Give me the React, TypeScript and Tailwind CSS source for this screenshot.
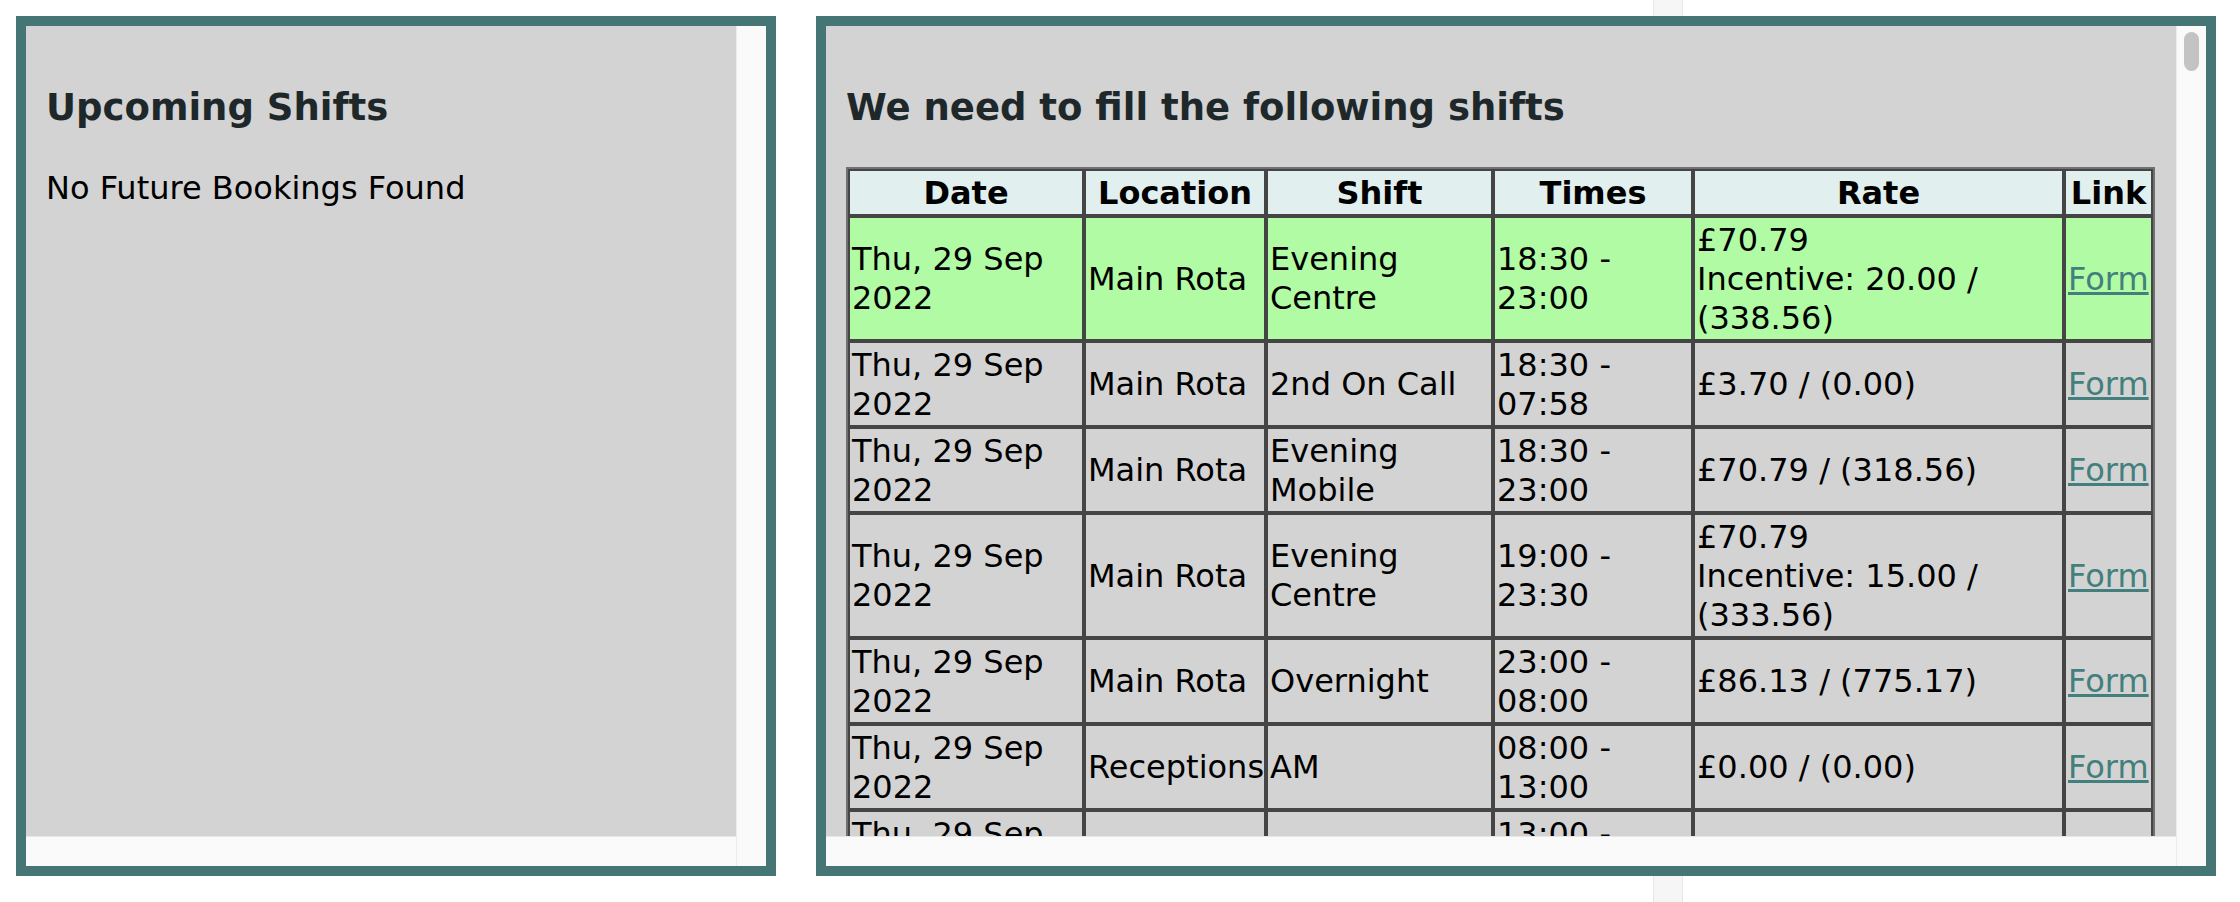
import React from "react";

type Row = {
  date: string;
  loc: string;
  shift: string;
  times: string;
  rate: React.ReactNode;
  green?: boolean;
};

const rows: Row[] = [
  {
    date: "Thu, 29 Sep 2022",
    loc: "Main Rota",
    shift: "Evening Centre",
    times: "18:30 - 23:00",
    rate: (
      <>
        £70.79
        <br />
        Incentive: 20.00 / (338.56)
      </>
    ),
    green: true,
  },
  { date: "Thu, 29 Sep 2022", loc: "Main Rota", shift: "2nd On Call", times: "18:30 - 07:58", rate: "£3.70 / (0.00)" },
  { date: "Thu, 29 Sep 2022", loc: "Main Rota", shift: "Evening Mobile", times: "18:30 - 23:00", rate: "£70.79 / (318.56)" },
  {
    date: "Thu, 29 Sep 2022",
    loc: "Main Rota",
    shift: "Evening Centre",
    times: "19:00 - 23:30",
    rate: (
      <>
        £70.79
        <br />
        Incentive: 15.00 / (333.56)
      </>
    ),
  },
  { date: "Thu, 29 Sep 2022", loc: "Main Rota", shift: "Overnight", times: "23:00 - 08:00", rate: "£86.13 / (775.17)" },
  { date: "Thu, 29 Sep 2022", loc: "Receptions", shift: "AM", times: "08:00 - 13:00", rate: "£0.00 / (0.00)" },
  { date: "Thu, 29 Sep 2022", loc: "Receptions", shift: "PM", times: "13:00 - 18:30", rate: "£0.00 / (0.00)" },
  { date: "Fri, 30 Sep 2022", loc: "Main Rota", shift: "Overnight", times: "23:00 - 08:00", rate: "£86.13 / (775.17)" },
];

function Panel({
  widthClass,
  thumb,
  children,
}: {
  widthClass: string;
  thumb?: boolean;
  children: React.ReactNode;
}) {
  return (
    <div className={`flex h-[860px] ${widthClass} shrink-0 border-[10px] border-[#457575] bg-[#fafafa]`}>
      <div className="flex min-w-0 flex-1 flex-col">
        <div className="min-h-0 flex-1 overflow-hidden bg-[#d3d3d3] px-[20px] pt-[20px]">{children}</div>
        <div className="h-[30px] shrink-0 border-t border-[#e6e6e6] bg-[#fafafa]" />
      </div>
      <div className="flex w-[30px] shrink-0 justify-center border-l border-[#ececec] bg-[#fafafa] pt-[6px]">
        {thumb ? <div className="h-[39px] w-[15px] rounded-full bg-[#c3c3c3]" /> : null}
      </div>
    </div>
  );
}

const th = "border-2 border-[#454545] bg-[#e1efef] px-[2px] pb-[1.5px] pt-[2.5px] text-center align-middle font-bold";
const td = "border-2 border-[#454545] px-[2px] pb-[1.5px] pt-[2.5px] text-left align-middle";

export default function App() {
  return (
    <div className="min-h-screen w-full bg-white bg-[linear-gradient(to_right,transparent_1653px,#e8e8e8_1653px,#e8e8e8_1654px,#f6f6f6_1654px,#f6f6f6_1682px,#e8e8e8_1682px,#e8e8e8_1683px,transparent_1683px)] font-['DejaVu_Sans',Verdana,sans-serif] text-black">
      <div className="flex gap-[40px] pl-[16px] pt-[16px]">
        <Panel widthClass="w-[760px]">
          <h3 className="mb-[39px] mt-[40px] text-[37px] font-bold leading-[44px] text-[#1e282a]">Upcoming Shifts</h3>
          <p className="text-[32px] leading-[39px]">No Future Bookings Found</p>
        </Panel>
        <Panel widthClass="w-[1400px]" thumb>
          <h3 className="mb-[37px] mt-[40px] whitespace-nowrap text-[37px] font-bold leading-[44px] text-[#1e282a]">
            We need to fill the following shifts
          </h3>
          <table className="w-[1309px] table-fixed border-separate border-spacing-0 border-2 border-[#707070] text-[32px] leading-[39px]">
            <colgroup>
              <col className="w-[236px]" />
              <col className="w-[182px]" />
              <col className="w-[227px]" />
              <col className="w-[200px]" />
              <col className="w-[371px]" />
              <col className="w-[89px]" />
            </colgroup>
            <thead>
              <tr>
                <th className={th}>Date</th>
                <th className={th}>Location</th>
                <th className={th}>Shift</th>
                <th className={th}>Times</th>
                <th className={th}>Rate</th>
                <th className={th}>Link</th>
              </tr>
            </thead>
            <tbody>
              {rows.map((r, i) => (
                <tr key={i} className={r.green ? "bg-[#b0fba4]" : ""}>
                  <td className={td}>{r.date}</td>
                  <td className={td}>{r.loc}</td>
                  <td className={td}>{r.shift}</td>
                  <td className={td}>{r.times}</td>
                  <td className={td}>{r.rate}</td>
                  <td className={`${td} whitespace-nowrap`}>
                    <a href="#" className="text-[#437f7c] underline">
                      Form
                    </a>
                  </td>
                </tr>
              ))}
            </tbody>
          </table>
        </Panel>
      </div>
    </div>
  );
}
